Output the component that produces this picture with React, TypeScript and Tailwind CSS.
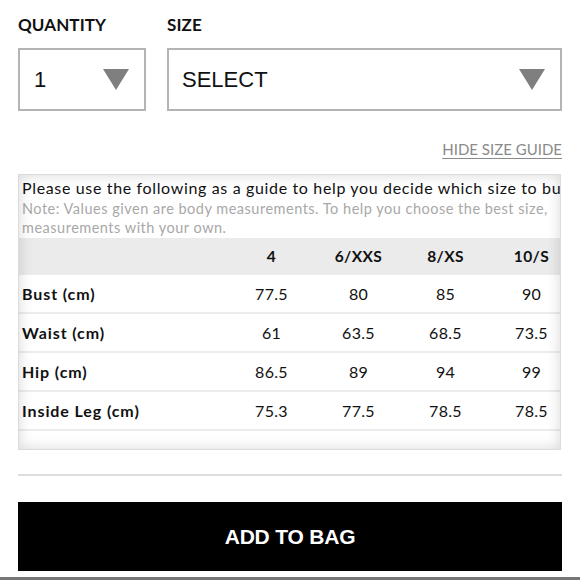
import React from 'react'

// 사이즈 가이드 표 데이터
const sizes = ['4', '6/XXS', '8/XS', '10/S']
const rows: { label: string; values: string[] }[] = [
  { label: 'Bust (cm)', values: ['77.5', '80', '85', '90'] },
  { label: 'Waist (cm)', values: ['61', '63.5', '68.5', '73.5'] },
  { label: 'Hip (cm)', values: ['86.5', '89', '94', '99'] },
  { label: 'Inside Leg (cm)', values: ['75.3', '77.5', '78.5', '78.5'] },
]

const futura = { fontFamily: 'Lato, "Noto Sans", sans-serif' }
const arial = { fontFamily: '"Liberation Sans", Arial, sans-serif' }

function Caret() {
  return (
    <svg width="26" height="21" viewBox="0 0 26 21" className="shrink-0">
      <polygon points="0,0 26,0 13,21" fill="#7f7f7f" />
    </svg>
  )
}

export default function App() {
  return (
    <div className="w-[580px] h-[580px] bg-white overflow-hidden relative px-[18px] pt-[13px]">
      {/* 수량 · 사이즈 셀렉트 */}
      <div className="flex gap-[21px]">
        <div className="w-[128px]">
          <div className="text-[17px] font-bold text-[#111] leading-[24px] tracking-[0.1px]" style={futura}>
            QUANTITY
          </div>
          <div className="mt-[11px] h-[63px] border-2 border-[#b4b4b4] flex items-center pl-[14px] pr-[15px] justify-between">
            <span className="text-[22px] text-[#111]" style={arial}>1</span>
            <Caret />
          </div>
        </div>
        <div className="flex-1">
          <div className="text-[17px] font-bold text-[#111] leading-[24px] tracking-[0.1px]" style={futura}>
            SIZE
          </div>
          <div className="mt-[11px] h-[63px] border-2 border-[#b4b4b4] flex items-center pl-[13px] pr-[15px] justify-between">
            <span className="text-[22px] text-[#111]" style={arial}>SELECT</span>
            <Caret />
          </div>
        </div>
      </div>

      <div className="flex justify-end mt-[28px]">
        <span className="text-[15px] leading-[20px] text-[#8a8a8a] underline underline-offset-[3px]" style={futura}>
          HIDE SIZE GUIDE
        </span>
      </div>

      {/* 사이즈 가이드 패널 */}
      <div className="relative mt-[15px] h-[276px] w-[543px] border border-[#dcdcdc] overflow-hidden bg-white" style={futura}>
        <div className="pl-[3px] pt-[3px] whitespace-nowrap">
          <div className="text-[16px] leading-[20px] text-[#111] tracking-[0.65px]">
            Please use the following as a guide to help you decide which size to bu
          </div>
          <div className="text-[14.5px] leading-[19px] text-[#a8a8a8] mt-[1px] tracking-[0.5px]">
            Note: Values given are body measurements. To help you choose the best size,
            <br />
            measurements with your own.
          </div>
        </div>
        <div className="mt-[1px]">
          <div className="grid grid-cols-[209px_87px_87px_87px_85px] h-[37px] items-center bg-[#ebebeb] text-[15.5px] font-bold text-[#111] tracking-[0.4px]">
            <div />
            {sizes.map((s) => (
              <div key={s} className="text-center">{s}</div>
            ))}
          </div>
          {rows.map((r) => (
            <div
              key={r.label}
              className="grid grid-cols-[209px_87px_87px_87px_85px] h-[39px] items-center border-b-2 border-[#ececec] text-[16px] text-[#111] tracking-[0.3px]"
            >
              <div className="pl-[3px] font-bold tracking-[0.9px]">{r.label}</div>
              {r.values.map((v, i) => (
                <div key={i} className="text-center">{v}</div>
              ))}
            </div>
          ))}
        </div>
        <div className="absolute inset-0 pointer-events-none shadow-[inset_0_0_14px_rgba(0,0,0,0.16)]" />
      </div>

      <div className="mt-[24px] h-[2px] bg-[#dedede]" />

      <button
        className="mt-[26px] w-full h-[69px] bg-black text-white text-[21px] font-bold tracking-[-0.2px]"
        style={arial}
      >
        ADD TO BAG
      </button>

      <div className="absolute left-0 right-0 bottom-0 h-[3px] bg-[#777]" />
    </div>
  )
}
